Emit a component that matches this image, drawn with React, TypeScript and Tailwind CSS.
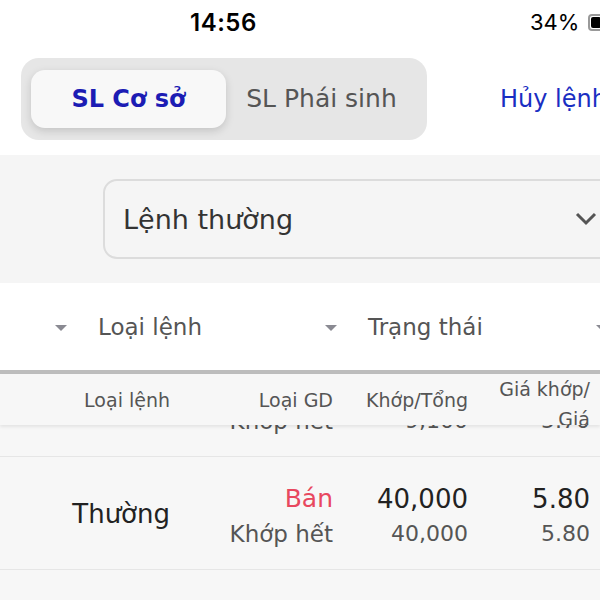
import { useState } from 'react';

type OrderRow = {
    kind: string;
    side: string;
    status: string;
    matched: string;
    total: string;
    price: string;
    orderPrice: string;
};

const rows: OrderRow[] = [
    { kind: 'Thường', side: 'Mua', status: 'Khớp hết', matched: '9,100', total: '9,100', price: '5.70', orderPrice: '5.70' },
    { kind: 'Thường', side: 'Bán', status: 'Khớp hết', matched: '40,000', total: '40,000', price: '5.80', orderPrice: '5.80' },
];

const cols = 'grid grid-cols-[170px_163px_135px_122px]';

function Caret() {
    return (
        <svg width="14" height="8" viewBox="0 0 14 8" className="shrink-0">
            <path d="M1 1h12L7 7z" fill="#8a8a92" />
        </svg>
    );
}

export default function App() {
    const [tab, setTab] = useState<'base' | 'deriv'>('base');

    return (
        <div className="w-[600px] h-[600px] overflow-hidden bg-white font-['DejaVu_Sans',sans-serif] text-[#222]">
            {/* status bar */}
            <div className="relative h-[44px] font-['Inter',sans-serif] text-[22px] text-black">
                <div className="absolute left-[190px] top-[5px] text-[24px] font-semibold tracking-[0.5px]">14:56</div>
                <div className="absolute left-[530px] top-[6px] flex items-center gap-[9px]">
                    <span>34%</span>
                    <div className="w-[30px] h-[17px] rounded-[4px] border-2 border-[#999] p-[1px]">
                        <div className="w-[10px] h-full bg-black rounded-[2px]" />
                    </div>
                </div>
            </div>

            {/* tabs */}
            <div className="flex items-center h-[111px] pb-[2px]">
                <div className="ml-[21px] w-[406px] shrink-0 h-[82px] rounded-[18px] bg-[#e6e6e6] flex items-center px-[10px]">
                    <button
                        onClick={() => setTab('base')}
                        className={`w-[195px] h-[58px] rounded-[14px] text-[24px] ${tab === 'base' ? 'bg-[#f8f8f8] shadow-[0_3px_8px_rgba(0,0,0,0.15)] text-[#1c1cb4] font-bold' : 'text-[#555]'}`}
                    >
                        SL Cơ sở
                    </button>
                    <button
                        onClick={() => setTab('deriv')}
                        className={`flex-1 h-[58px] rounded-[14px] text-[25px] ${tab === 'deriv' ? 'bg-[#f8f8f8] shadow-[0_3px_8px_rgba(0,0,0,0.15)] text-[#1c1cb4] font-bold' : 'text-[#555]'}`}
                    >
                        SL Phái sinh
                    </button>
                </div>
                <div className="ml-[73px] shrink-0 whitespace-nowrap text-[24px] text-[#1a2ec2]">Hủy lệnh</div>
            </div>

            {/* order type dropdown */}
            <div className="bg-[#f5f5f5] h-[128px] flex items-center pl-[103px]">
                <div className="w-[510px] shrink-0 h-[80px] rounded-[14px] border-2 border-[#dcdcdc] flex items-center pl-[18px] pr-[14px] justify-between">
                    <span className="text-[27px] text-[#333] pt-[3px]">Lệnh thường</span>
                    <svg width="22" height="14" viewBox="0 0 22 14">
                        <path d="M2 2l9 9 9-9" stroke="#555" strokeWidth="3" fill="none" />
                    </svg>
                </div>
            </div>

            {/* filters */}
            <div className="h-[87px] flex items-center whitespace-nowrap text-[23px] text-[#555] pt-[2px]">
                <div className="ml-[54px]"><Caret /></div>
                <span className="ml-[30px]">Loại lệnh</span>
                <div className="ml-[122px]"><Caret /></div>
                <span className="ml-[30px]">Trạng thái</span>
                <div className="ml-[112px]"><Caret /></div>
            </div>
            <div className="h-[4px] bg-[#bdbdbd]" />

            {/* table */}
            <div className="bg-[#f7f7f7] h-[300px]">
                <div className={`${cols} relative z-10 h-[51px] overflow-hidden bg-[#f7f7f7] shadow-[0_2px_3px_rgba(0,0,0,0.08)] text-[19px] text-[#555] text-right`}>
                    <div className="pt-[12px]">Loại lệnh</div>
                    <div className="pt-[12px]">Loại GD</div>
                    <div className="pt-[12px]">Khớp/Tổng</div>
                    <div className="pt-[0px] leading-[30px] whitespace-nowrap">Giá khớp/<br />Giá</div>
                </div>
                <div className="-mt-[81px]">
                    {rows.map((r, i) => (
                        <div key={i} className={`${cols} h-[113px] border-b border-[#e6e6e6] text-right items-center`}>
                            <div className="text-[26px] text-[#222] pt-[3px]">{r.kind}</div>
                            <div className="flex flex-col gap-[5px] pt-[4px]">
                                <span className={`text-[25px] leading-[32px] ${r.side === 'Bán' ? 'text-[#e8485f]' : 'text-[#1fa35a]'}`}>{r.side}</span>
                                <span className="text-[23px] leading-[28px] text-[#555]">{r.status}</span>
                            </div>
                            <div className="flex flex-col gap-[5px] pt-[4px]">
                                <span className="text-[26px] leading-[32px]">{r.matched}</span>
                                <span className="text-[22px] leading-[28px] text-[#555]">{r.total}</span>
                            </div>
                            <div className="flex flex-col gap-[5px] pt-[4px]">
                                <span className="text-[26px] leading-[32px]">{r.price}</span>
                                <span className="text-[22px] leading-[28px] text-[#555]">{r.orderPrice}</span>
                            </div>
                        </div>
                    ))}
                </div>
            </div>
        </div>
    );
}
